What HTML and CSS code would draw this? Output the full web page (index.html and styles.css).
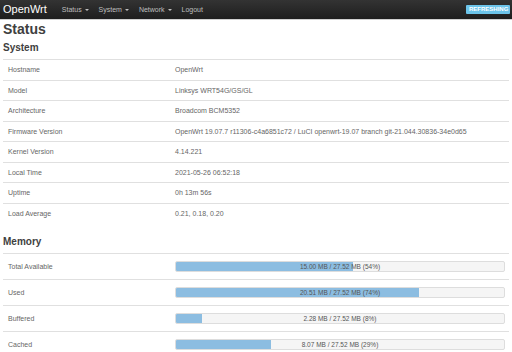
FILE: index.html
```html
<!DOCTYPE html>
<html lang="en">

<head>
  <meta charset="UTF-8">
  <meta name="viewport" content="width=device-width, initial-scale=1.0">
  <title>OpenWrt - Status</title>
  <link rel="stylesheet" href="styles.css">
</head>

<body>
  <header class="topbar">
    <a class="brand" href="#">OpenWrt</a>
    <ul class="nav">
      <li><a href="#">Status <span class="caret"></span></a></li>
      <li><a href="#">System <span class="caret"></span></a></li>
      <li><a href="#">Network <span class="caret"></span></a></li>
      <li><a href="#">Logout</a></li>
    </ul>
    <span class="label-refresh">Refreshing</span>
  </header>

  <div class="main">
    <h2>Status</h2>

    <h3>System</h3>
    <div class="table">
      <div class="tr"><div class="td">Hostname</div><div class="td">OpenWrt</div></div>
      <div class="tr"><div class="td">Model</div><div class="td">Linksys WRT54G/GS/GL</div></div>
      <div class="tr"><div class="td">Architecture</div><div class="td">Broadcom BCM5352</div></div>
      <div class="tr"><div class="td">Firmware Version</div><div class="td">OpenWrt 19.07.7 r11306-c4a6851c72 / LuCI openwrt-19.07 branch git-21.044.30836-34e0d65</div></div>
      <div class="tr"><div class="td">Kernel Version</div><div class="td">4.14.221</div></div>
      <div class="tr"><div class="td">Local Time</div><div class="td">2021-05-26 06:52:18</div></div>
      <div class="tr"><div class="td">Uptime</div><div class="td">0h 13m 56s</div></div>
      <div class="tr"><div class="td">Load Average</div><div class="td">0.21, 0.18, 0.20</div></div>
    </div>

    <h3 class="memory-title">Memory</h3>
    <div class="table memory">
      <div class="tr">
        <div class="td">Total Available</div>
        <div class="td"><div class="cbi-progressbar" title="54%"><div style="width:54%"></div><span>15.00 MB / 27.52 MB (54%)</span></div></div>
      </div>
      <div class="tr">
        <div class="td">Used</div>
        <div class="td"><div class="cbi-progressbar" title="74%"><div style="width:74%"></div><span>20.51 MB / 27.52 MB (74%)</span></div></div>
      </div>
      <div class="tr">
        <div class="td">Buffered</div>
        <div class="td"><div class="cbi-progressbar" title="8%"><div style="width:8%"></div><span>2.28 MB / 27.52 MB (8%)</span></div></div>
      </div>
      <div class="tr">
        <div class="td">Cached</div>
        <div class="td"><div class="cbi-progressbar" title="29%"><div style="width:29%"></div><span>8.07 MB / 27.52 MB (29%)</span></div></div>
      </div>
    </div>
  </div>
</body>

</html>
```

FILE: styles.css
```css
body {
  margin: 0;
  font-family: "Liberation Sans", Arial, sans-serif;
  color: #404040;
  background: #fff;
}

a {
  text-decoration: none;
}

.topbar {
  height: 19px;
  display: flex;
  align-items: center;
  padding: 0 2px 0 3px;
  background: linear-gradient(#333, #1e1e1e);
  border-bottom: 1px solid #d0d0d0;
}

.brand {
  color: #fff;
  font-size: 11px;
  line-height: 19px;
  margin-right: 10px;
}

.nav {
  display: flex;
  list-style: none;
  margin: 0;
  padding: 0;
  flex: 1;
}

.nav a {
  display: block;
  padding: 0 5px;
  color: #bfbfbf;
  font-size: 7px;
  line-height: 19px;
}

.caret {
  display: inline-block;
  width: 0;
  height: 0;
  margin-left: 1px;
  vertical-align: middle;
  border-top: 2px solid #bfbfbf;
  border-left: 2px solid transparent;
  border-right: 2px solid transparent;
}

.label-refresh {
  background: #6cc4ea;
  color: #fff;
  font-size: 6px;
  font-weight: bold;
  text-transform: uppercase;
  line-height: 9px;
  padding: 0 3px;
  width: 38px;
  text-align: center;
  border-radius: 1px;
  margin-top: -1px;
}

.main {
  padding: 0 3px;
}

h2 {
  margin: 1px 0 0;
  font-size: 14px;
  line-height: 16px;
  color: #404040;
}

h3 {
  margin: 5px 0 5px;
  font-size: 10px;
  line-height: 12px;
  color: #404040;
}

h3.memory-title {
  margin-top: 13px;
  margin-bottom: 5px;
}

.table {
  font-size: 7px;
  color: #666;
}

.tr {
  display: grid;
  grid-template-columns: 172px 1fr;
  align-items: center;
  height: 20.5px;
  box-sizing: border-box;
  border-top: 1px solid #e0e0e0;
}

.tr .td:first-child {
  padding-left: 5px;
}

.memory .tr {
  height: 26px;
}

.memory .tr .td:last-child {
  padding-right: 4px;
}

.cbi-progressbar {
  position: relative;
  height: 9px;
  border: 1px solid #ddd;
  border-radius: 2px;
  background: #f5f5f5;
  overflow: hidden;
}

.cbi-progressbar div {
  height: 100%;
  background: #8cbde1;
}

.cbi-progressbar span {
  position: absolute;
  top: 0;
  left: 0;
  right: 0;
  text-align: center;
  line-height: 9px;
  font-size: 6.5px;
  color: #555;
}
```
